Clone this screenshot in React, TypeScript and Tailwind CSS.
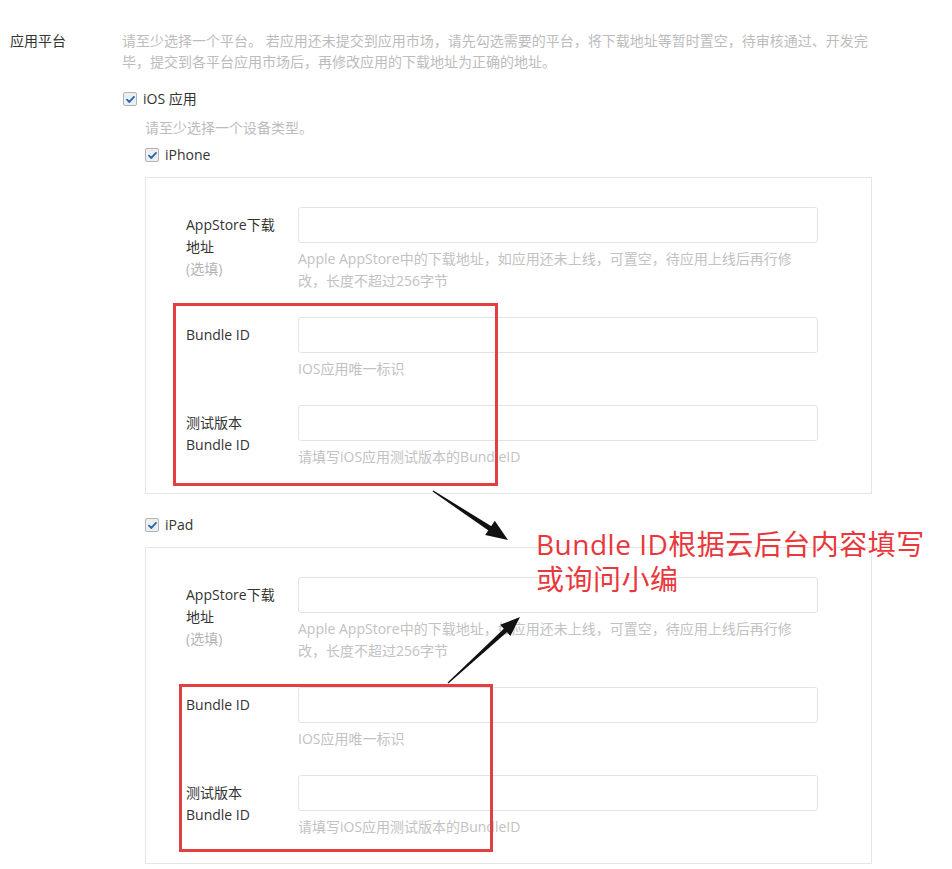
import React from "react";

function Check({ label }: { label: string }) {
  return (
    <label className="flex h-[22px] items-center gap-[6px] leading-[22px] text-[#333]">
      <span className="flex h-[14px] w-[14px] items-center justify-center rounded-[2px] border border-[#b4b4b4] bg-[#eceef0]">
        <svg viewBox="0 0 12 12" className="h-[11px] w-[11px]">
          <path d="M2.2 6.2 L4.8 8.7 L9.8 3.2" fill="none" stroke="#2267b0" strokeWidth="2" strokeLinecap="round" strokeLinejoin="round" />
        </svg>
      </span>
      <span>{label}</span>
    </label>
  );
}

function Row({ label, help }: { label: React.ReactNode; help: React.ReactNode }) {
  return (
    <div className="flex pb-[25px]">
      <div className="w-[112px] pt-[7px] leading-[22px] text-[#333]">{label}</div>
      <div className="w-[520px]">
        <input className="block h-[36px] w-full rounded-[3px] border border-[#e3e3e3] bg-white outline-none" />
        <p className="mt-[5px] leading-[22px] text-[#c2c2c2]">{help}</p>
      </div>
    </div>
  );
}

function DevicePanel() {
  return (
    <div className="ml-[23px] mt-[11px] w-[727px] border border-[#e6e6e6] pl-[40px] pt-[29px]">
      <Row
        label={
          <>
            AppStore下载
            <br />
            地址
            <br />
            <span className="text-[#b4b4b4]">(选填)</span>
          </>
        }
        help={
          <>
            Apple AppStore中的下载地址，如应用还未上线，可置空，待应用上线后再行修
            <br />
            改，长度不超过256字节
          </>
        }
      />
      <Row label="Bundle ID" help="IOS应用唯一标识" />
      <Row
        label={
          <>
            测试版本
            <br />
            Bundle ID
          </>
        }
        help="请填写iOS应用测试版本的BundleID"
      />
    </div>
  );
}

export default function App() {
  return (
    <div className="relative min-h-[869px] w-[952px] overflow-hidden bg-white text-[14px] text-[#333] font-['Open_Sans','Noto_Sans_CJK_SC',sans-serif]">
      <div className="flex pt-[30px]">
        {/* Left label */}
        <div className="w-[122px] pl-[10px] leading-[21px]">应用平台</div>

        {/* Form content */}
        <div className="w-[752px]">
          <p className="leading-[21px] text-[#bcbcbc]">
            请至少选择一个平台。 若应用还未提交到应用市场，请先勾选需要的平台，将下载地址等暂时置空，待审核通过、开发完
            <br />
            毕，提交到各平台应用市场后，再修改应用的下载地址为正确的地址。
          </p>

          <div className="mt-[16px] pl-[1px]">
            <Check label="iOS 应用" />
          </div>
          <p className="mt-[7px] pl-[23px] leading-[22px] text-[#bcbcbc]">请至少选择一个设备类型。</p>

          <div className="mt-[5px] pl-[23px]">
            <Check label="iPhone" />
          </div>
          <DevicePanel />

          <div className="mt-[20px] pl-[23px]">
            <Check label="iPad" />
          </div>
          <DevicePanel />
        </div>
      </div>

      {/* Annotation boxes */}
      <div className="absolute left-[173px] top-[303px] h-[183px] w-[325px] border-[3px] border-[#e33e42]" />
      <div className="absolute left-[179px] top-[684px] h-[168px] w-[314px] border-[3px] border-[#e33e42]" />

      {/* Arrows */}
      <svg className="pointer-events-none absolute left-0 top-0" width="952" height="869">
        <polygon points="433.4,490.4 432.6,491.6 490.6,532 493.4,527.6" fill="#111" />
        <polygon points="508,540 485.2,535 494.8,520.8" fill="#111" />
        <polygon points="448.4,683.4 447.6,682.6 505.4,627.2 508.6,630.8" fill="#111" />
        <polygon points="520,617 510.4,636 500.2,624.8" fill="#111" />
      </svg>

      {/* Annotation text */}
      <div className="absolute left-[536px] top-[527px] text-[28px] leading-[35px] tracking-[0.5px] text-[#e8383d]">
        Bundle ID根据云后台内容填写
        <br />
        或询问小编
      </div>
    </div>
  );
}
